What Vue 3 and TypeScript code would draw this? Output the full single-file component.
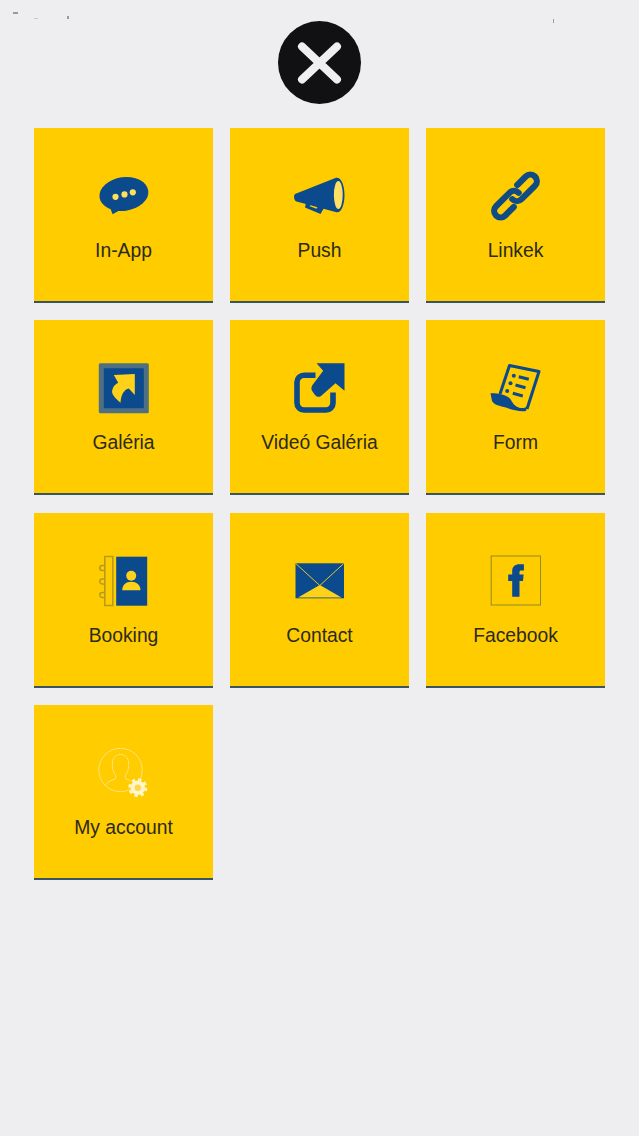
<script setup lang="ts">
interface Tile {
	label: string;
	icon: string;
}

const tiles: Tile[] = [
	{ label: 'In-App', icon: 'chat' },
	{ label: 'Push', icon: 'megaphone' },
	{ label: 'Linkek', icon: 'link' },
	{ label: 'Galéria', icon: 'gallery' },
	{ label: 'Videó Galéria', icon: 'external' },
	{ label: 'Form', icon: 'form' },
	{ label: 'Booking', icon: 'book' },
	{ label: 'Contact', icon: 'mail' },
	{ label: 'Facebook', icon: 'facebook' },
	{ label: 'My account', icon: 'account' },
];
</script>

<template>
	<div class="page">
		<i class="speck speck-a"></i>
		<i class="speck speck-b"></i>
		<i class="speck speck-c"></i>
		<i class="speck speck-d"></i>

		<button class="close" aria-label="Close">
			<svg width="83" height="83" viewBox="0 0 83 83">
				<path d="M24 25.5 L59 58.5 M59 25.5 L24 58.5" stroke="#efeff1" stroke-width="8" stroke-linecap="round" fill="none" />
			</svg>
		</button>

		<div class="grid">
			<div v-for="tile in tiles" :key="tile.label" class="tile">
				<svg class="icon" width="60" height="60" viewBox="0 0 60 60">
					<g v-if="tile.icon === 'chat'">
						<ellipse cx="29.9" cy="26" rx="24.6" ry="16.8" transform="rotate(-8 29.9 26)" fill="#0b4a8c" />
						<path fill="#0b4a8c" d="M10 34C14 36.5 16.5 39.5 18.6 46.3L28 41Z" />
						<circle cx="21.5" cy="28.8" r="3.1" fill="#ffe05a" />
						<circle cx="30.5" cy="26.4" r="3.1" fill="#ffe05a" />
						<circle cx="38.8" cy="24.3" r="3.1" fill="#ffe05a" />
					</g>

					<g v-else-if="tile.icon === 'megaphone'">
						<path fill="#0b4a8c" d="M16.5 32L34.5 39L30.5 46L15 39.5Z" />
						<path fill="#ffcc00" d="M20.5 36.5L27.5 39L26.5 40.8L19.8 38.2Z" />
						<path fill="#0b4a8c" d="M5 26L46 9.8C51 8.8 54.5 17 54.5 27C54.5 37 51 45.5 46.5 44.2L6.5 33.5C3.8 32.5 3.4 27.5 5 26Z" />
						<ellipse cx="48.3" cy="27" rx="4.4" ry="14" fill="#ffdf66" />
					</g>

					<g v-else-if="tile.icon === 'link'" transform="translate(29.5 28) rotate(-45)" fill="none" stroke="#0f4b85" stroke-width="6.2" stroke-linecap="round">
						<path d="M-9 6.5H-21A6.5 6.5 0 0 1-21-6.5H-2A6.5 6.5 0 0 1 4.5 0" />
						<path d="M9-6.5H21A6.5 6.5 0 0 1 21 6.5H2A6.5 6.5 0 0 1-4.5 0" />
					</g>

					<g v-else-if="tile.icon === 'gallery'">
						<rect x="4.8" y="3.3" width="50" height="50" rx="1.5" fill="#4f6f82" />
						<rect x="9.8" y="8.3" width="40" height="40" rx="1" fill="#0b4a8c" />
						<path fill="#ffd21a" d="M19.8 15L40.8 14V35L34.8 28.5C30 29.5 27 35 26.5 42.7C21 38 17 34 18.3 30C19 26.5 21.5 24 24.2 22.7Z" />
					</g>

					<g v-else-if="tile.icon === 'external'">
						<path fill="none" stroke="#0b4a8c" stroke-width="5.6" d="M25.5 15.3H14a7 7 0 0 0-7 7V43a7 7 0 0 0 7 7H36a7 7 0 0 0 7-7V32.5" />
						<path fill="#0b4a8c" d="M26.5 3.3H54.5V30.7L45.5 23.3L31 36C29 37.5 27 37 25 35L22.5 31.5C21 29.5 21 27.5 22.5 25L33.2 10.7Z" />
					</g>

					<g v-else-if="tile.icon === 'form'">
						<path fill="none" stroke="#0b4a8c" stroke-width="3" stroke-linejoin="round" d="M14 34L23.5 5.5L53 11.5L41 49" />
						<path fill="#0b4a8c" d="M4.5 33.3C12 33 22 35 25 40C27 44 30 47.5 35 48C38 48.5 41 47 41.5 46L40 51C34 52 26 50 20 47.5C14 46 8 45 6 41Z" />
						<circle cx="27.8" cy="15.7" r="2" fill="#0b4a8c" />
						<circle cx="24.5" cy="23.3" r="2" fill="#0b4a8c" />
						<circle cx="21.2" cy="31" r="2" fill="#0b4a8c" />
						<path fill="none" stroke="#0b4a8c" stroke-width="3" d="M32.8 16.7L42.8 19.3M29.5 25L39.5 27.7M26.8 33.3L36.8 36" />
					</g>

					<g v-else-if="tile.icon === 'book'">
						<rect x="22.2" y="3.7" width="31" height="49" fill="#0b4a8c" />
						<circle cx="37.2" cy="22.7" r="5" fill="#ffd21a" />
						<path fill="#ffd21a" d="M28.2 37.2C28.2 32 32 28.7 37.2 28.7C42.5 28.7 46.5 32 46.5 37.2Z" />
						<path fill="none" stroke="#b59a1f" stroke-width="1.5" d="M10.8 3.5H18.8V52.5H10.8ZM10.8 12.5H8.3A2.5 2.5 0 0 0 8.3 17.5H10.8M10.8 26H8.3A2.5 2.5 0 0 0 8.3 31H10.8M10.8 39.5H8.3A2.5 2.5 0 0 0 8.3 44.5H10.8" />
					</g>

					<g v-else-if="tile.icon === 'mail'">
						<rect x="5.5" y="10.3" width="48.5" height="35" fill="#0b4a8c" />
						<path fill="#ffd21a" d="M8 44.6L29.8 32L51.5 44.6Z" />
						<path fill="none" stroke="#ffd21a" stroke-width="0.9" d="M5.8 10.6L29.8 32.5L53.7 10.6" />
					</g>

					<g v-else-if="tile.icon === 'facebook'">
						<rect x="5.2" y="3" width="49.3" height="49" fill="none" stroke="#8f8a2a" stroke-width="1" />
						<path fill="#0b4a8c" d="M26.2 43.7V28H22.2V21.4H26.2V18C26.2 13.5 29 11.2 33.5 11.2H37.9V17.4H35.3C33.9 17.4 33.5 18 33.5 19.3V21.4H37.6L37 28H33.5V43.7Z" />
					</g>

					<g v-else-if="tile.icon === 'account'">
						<circle cx="26.5" cy="25" r="21.7" fill="none" stroke="#ffe27a" stroke-width="1" />
						<path fill="none" stroke="#ffe27a" stroke-width="1" d="M11 41C13 37 17 35.5 21 34C22.5 33.2 22 31 20.5 28.5C18.5 25 18 22 18.5 17C19 12 22.5 9.5 26.5 9.5C30.5 9.5 34 12 34.5 17C35 22 34.5 25 32.5 28.5C31 31 30.5 33 32 34L36 35.5" />
						<circle cx="43.8" cy="42.7" r="7.8" fill="none" stroke="#fff6cc" stroke-width="3.4" stroke-dasharray="3.2 2.93" />
						<circle cx="43.8" cy="42.7" r="7.2" fill="#fff6cc" />
						<circle cx="43.8" cy="42.7" r="3.2" fill="#ffd84a" />
					</g>
				</svg>
				<span class="label">{{ tile.label }}</span>
			</div>
		</div>
	</div>
</template>

<style scoped>
	.page {
		position: relative;
		height: 1136px;
		box-sizing: border-box;
		padding: 21px 34px 0;
		background: #eeeef0;
		display: flex;
		flex-direction: column;
		align-items: center;
		overflow: hidden;
	}
	.speck {
		position: absolute;
		background: #9a9aa0;
	}
		.speck-a { left: 13px; top: 12px; width: 5px; height: 2px; }
		.speck-b { left: 34px; top: 18px; width: 4px; height: 1px; background: #c8c8cc; }
		.speck-c { left: 67px; top: 16px; width: 2px; height: 3px; }
		.speck-d { left: 553px; top: 19px; width: 1px; height: 4px; }
	.close {
		width: 83px;
		height: 83px;
		padding: 0;
		border: none;
		border-radius: 50%;
		background: #111114;
		flex-shrink: 0;
		display: block;
	}
		.close svg {
			display: block;
		}
	.grid {
		margin-top: 24px;
		width: 571px;
		display: grid;
		grid-template-columns: repeat(3, 179px);
		grid-auto-rows: 175px;
		column-gap: 17px;
		row-gap: 17.25px;
	}
	.tile {
		box-sizing: border-box;
		background: #ffcc00;
		border-bottom: 2px solid #3a5562;
		padding-top: 40px;
		display: flex;
		flex-direction: column;
		align-items: center;
	}
	.icon {
		display: block;
		flex-shrink: 0;
	}
	.label {
		margin-top: 12px;
		font-family: "Liberation Sans", Arial, sans-serif;
		font-size: 19.3px;
		line-height: 22px;
		color: #2b2a1c;
	}
</style>
